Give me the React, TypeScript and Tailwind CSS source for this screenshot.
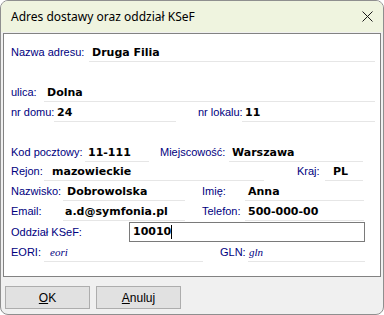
import React from "react";

const LBL = "shrink-0 h-[17px] leading-[17px] text-[11px] text-[#000080] whitespace-nowrap";
const lblFont = { fontFamily: '"Liberation Sans", Arial, sans-serif' };

function Label({ w, children }: { w: number; children: React.ReactNode }) {
  return (
    <span className={LBL} style={{ ...lblFont, width: w }}>
      {children}
    </span>
  );
}

function Field({ w, pl = 3, children, italic = false }: { w: number; pl?: number; children?: React.ReactNode; italic?: boolean }) {
  return (
    <div
      className={
        "shrink-0 h-[18px] border-b border-[#e6e6e6] whitespace-nowrap overflow-hidden " +
        (italic
          ? "text-[11px] italic text-[#000080] leading-[17px] font-['Liberation_Serif',serif]"
          : "text-[11px] font-bold text-black leading-[17px] font-['DejaVu_Sans',Verdana,sans-serif]")
      }
      style={{ width: w, paddingLeft: pl }}
    >
      {children}
    </div>
  );
}

function Gap({ w }: { w: number }) {
  return <div className="shrink-0" style={{ width: w }} />;
}

export default function App() {
  return (
    <div className="w-[384px] h-[315px] bg-white">
      <div className="w-[384px] h-[315px] rounded-[8px] border border-[#8f8f8f] overflow-hidden bg-[#f0f0f0] flex flex-col">
        {/* title bar */}
        <div className="h-[31px] shrink-0 bg-[#eff4df] flex items-center pl-[10px] pr-[9px]">
          <span className="flex-1 text-[12px] text-black font-['Noto_Sans',sans-serif] leading-none">
            Adres dostawy oraz oddział KSeF
          </span>
          <svg width="11" height="11" viewBox="0 0 11 11" className="mr-[1px]">
            <path d="M0.5 0.5 L10.5 10.5 M10.5 0.5 L0.5 10.5" stroke="#1a1a1a" strokeWidth="1" />
          </svg>
        </div>
        {/* body */}
        <div className="flex-1 flex flex-col px-[2px] pt-[1px]">
          <div className="h-[244px] shrink-0 border border-[#828282] bg-white flex flex-col pl-[7px]">
            {/* row1 */}
            <div className="flex mt-[10px]">
              <Label w={78}>Nazwa adresu:</Label>
              <Field w={286}>Druga Filia</Field>
            </div>
            {/* row2 */}
            <div className="flex mt-[22px]">
              <Label w={33}>ulica:</Label>
              <Field w={331}>Dolna</Field>
            </div>
            {/* row3 */}
            <div className="flex mt-[2px]">
              <Label w={43}>nr domu:</Label>
              <Field w={122}>24</Field>
              <Gap w={22} />
              <Label w={44}>nr lokalu:</Label>
              <Field w={133}>11</Field>
            </div>
            {/* row4 */}
            <div className="flex mt-[22px]">
              <Label w={74}>Kod pocztowy:</Label>
              <Field w={64}>11-111</Field>
              <Gap w={11} />
              <Label w={69}>Miejscowość:</Label>
              <Field w={134}>Warszawa</Field>
            </div>
            {/* row5 */}
            <div className="flex mt-[1px]">
              <Label w={33}>Rejon:</Label>
              <Field w={220} pl={8}>mazowieckie</Field>
              <Gap w={33} />
              <Label w={28}>Kraj:</Label>
              <Field w={38} pl={8}>PL</Field>
            </div>
            {/* row6 */}
            <div className="flex mt-[2px]">
              <Label w={52}>Nazwisko:</Label>
              <Field w={122} pl={4}>Dobrowolska</Field>
              <Gap w={17} />
              <Label w={43}>Imię:</Label>
              <Field w={119}>Anna</Field>
            </div>
            {/* row7 */}
            <div className="flex mt-[2px]">
              <Label w={52}>Email:</Label>
              <Field w={122} pl={2}>a.d@symfonia.pl</Field>
              <Gap w={17} />
              <Label w={43}>Telefon:</Label>
              <Field w={119}>500-000-00</Field>
            </div>
            {/* row8 */}
            <div className="flex mt-[1px] items-center">
              <Label w={118}>Oddział KSeF:</Label>
              <div className="shrink-0 w-[236px] h-[20px] border border-[#7a7a7a] flex items-center pl-[3px] text-[11px] font-bold text-black font-['DejaVu_Sans',Verdana,sans-serif]">
                <span>10010</span>
                <span className="inline-block w-[1px] h-[14px] bg-black" />
              </div>
            </div>
            {/* row9 */}
            <div className="flex mt-[2px]">
              <Label w={33}>EORI:</Label>
              <Field w={159} pl={6} italic>eori</Field>
              <Gap w={17} />
              <Label w={28}>GLN:</Label>
              <Field w={117} pl={1} italic>gln</Field>
            </div>
          </div>
          {/* buttons */}
          <div className="flex gap-[6px] mt-[9px] ml-[2px]">
            <button className="w-[85px] h-[23px] bg-[#e1e1e1] border border-[#adadad] text-[12px] text-black font-['Liberation_Sans',Arial,sans-serif] flex items-center justify-center">
              <span><span className="underline">O</span>K</span>
            </button>
            <button className="w-[85px] h-[23px] bg-[#e1e1e1] border border-[#adadad] text-[12px] text-black font-['Liberation_Sans',Arial,sans-serif] flex items-center justify-center">
              <span><span className="underline">A</span>nuluj</span>
            </button>
          </div>
        </div>
      </div>
    </div>
  );
}
